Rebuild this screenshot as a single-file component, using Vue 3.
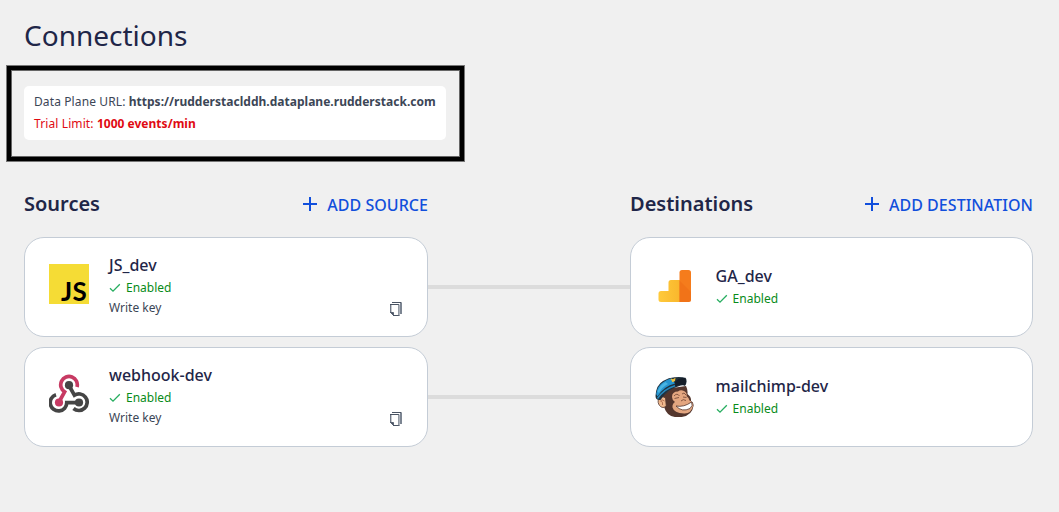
<script setup>
const sources = [
  { name: 'JS_dev', icon: 'js' },
  { name: 'webhook-dev', icon: 'webhook' },
]
const destinations = [
  { name: 'GA_dev', icon: 'analytics' },
  { name: 'mailchimp-dev', icon: 'mailchimp' },
]
</script>

<template>
  <main class="page">
    <h1>Connections</h1>

    <section class="highlight">
      <div class="plane">
        <p>Data Plane URL: <b>https://rudderstaclddh.dataplane.rudderstack.com</b></p>
        <p class="limit">Trial Limit: <b>1000 events/min</b></p>
      </div>
    </section>

    <div class="board">
      <section class="column">
        <header>
          <h2>Sources</h2>
          <a class="add">
            <svg width="14" height="14" viewBox="0 0 14 14"><path d="M7 0v14M0 7h14" /></svg>
            <span>ADD SOURCE</span>
          </a>
        </header>
        <article v-for="s in sources" :key="s.name" class="card">
          <div v-if="s.icon === 'js'" class="logo js"><span>JS</span></div>
          <svg v-else class="logo" viewBox="0 0 40 40">
            <g fill="none" stroke-width="3.7">
              <path stroke="#c73a63" d="M28 13A8.3 8.3 0 1 0 15.6 17.8L10 28" />
              <path stroke="#454545" d="M20 11.5L25.4 21.2A8.3 8.3 0 1 1 24.5 34.5" />
              <path stroke="#454545" d="M7 20.7A8.3 8.3 0 1 0 17.8 28.6H30" />
            </g>
            <circle cx="20" cy="11.2" r="4.1" fill="#454545" />
            <circle cx="10" cy="28.5" r="4.1" fill="#c73a63" />
            <circle cx="30" cy="28.5" r="4.1" fill="#454545" />
          </svg>
          <div class="info">
            <h3>{{ s.name }}</h3>
            <p class="status">
              <svg width="12" height="10" viewBox="0 0 12 10"><path d="M1 5.3L4 8.2L10.8 1.2" /></svg>
              <span>Enabled</span>
            </p>
            <p class="key">Write key</p>
          </div>
          <svg class="copy" width="12" height="14" viewBox="0 0 12 14">
            <path d="M2 .5H11.5" stroke="#495363" />
            <path d="M11 1V12" stroke="#7c8592" stroke-width="2" />
            <path d="M.7 2.5V11" stroke="#6f7886" stroke-width="1.4" />
            <path d="M0 2.500H9M3 13.500H9.500" stroke="#495363" />
            <path d="M8.900 2.500V13.500" stroke="#6f7886" stroke-width="1.300" />
            <path d="M.5 10.500H3.500V13.500Z" fill="#495363" stroke="#495363" stroke-width=".8" />
          </svg>
        </article>
      </section>

      <div class="links"><i></i><i></i></div>

      <section class="column">
        <header>
          <h2>Destinations</h2>
          <a class="add">
            <svg width="14" height="14" viewBox="0 0 14 14"><path d="M7 0v14M0 7h14" /></svg>
            <span>ADD DESTINATION</span>
          </a>
        </header>
        <article v-for="d in destinations" :key="d.name" class="card destination">
          <svg v-if="d.icon === 'analytics'" class="logo analytics" viewBox="0 0 40 40">
            <defs>
              <linearGradient id="gold" x1="0" x2="1"><stop stop-color="#ffca3b" /><stop offset="1" stop-color="#f9b62c" /></linearGradient>
            </defs>
            <path fill="url(#gold)" d="M26 14H16Q13.500 14 13.500 16.500V25H6Q3.500 25 3.500 27.500V33.500Q3.500 36 6 36H26Z" />
            <path fill="#f57c1c" d="M24.500 6.500Q24.500 4 27 4H33.500Q36 4 36 6.500V33.500Q36 36 33.500 36H24.500Z" />
            <path fill="#ed6c16" opacity=".55" d="M24.500 14.500L36 26V33.500Q36 36 33.500 36H24.500Z" />
          </svg>
          <svg v-else class="logo" viewBox="0 0 40 40">
            <path fill="#54362d" d="M7 19L17 11L31 9Q33 13 32.500 17Q36.500 20 36 24Q39 25 38.500 29Q37 40 23 40.300Q12 40 9.500 31Z" />
            <path fill="#f0b98e" stroke="#54362d" stroke-width=".8" d="M10.500 21C6 18 2.500 21 3.200 25.500C4 30 9 32.500 11.200 28.500Z" />
            <path fill="none" stroke="#b57454" d="M9.500 24Q6.500 21.500 5.500 24Q8.500 24.500 7.500 28" />
            <path fill="#e3a680" d="M17 20Q17 14.500 23 14.500Q25.500 12.500 29 14Q32.500 16 31.500 19Q34 20.500 34.500 23.500Q38 24.500 38 29Q36 37 29 36.500Q19 36 17.500 30.500Q17 27 20 25Q17 23 17 20Z" />
            <path fill="none" stroke="#6d4333" stroke-width=".8" d="M19 19Q22 15.500 24.500 19M27 17Q29 14.500 31 18M19.500 21.500L24 20.500M28 20L31.500 20.500M26 24Q28 21.500 31 23.500" />
            <path fill="#fff" stroke="#54362d" stroke-width=".8" d="M21 29Q29 30.500 36.500 25Q38.500 28.500 35 31.500Q27 35.500 21 29Z" />
            <path fill="#20313e" d="M.5 19Q1 8 8 4Q14 .2 20 .3Q27-.5 31 1.500Q32.500 5 30 8.800Q28 7.500 23 9.500Q12 12.500 5.500 23Q.5 23.500.5 19Z" />
            <path fill="#2594cf" d="M1.200 17Q2.500 8.500 8.500 5Q12 2 16.500 1.500L20 6.500Q9 9 2.500 19.500Z" />
            <path fill="#49b4e2" d="M2.500 14.500Q5 8 10.500 5L13 7Q7 10 4 16Z" />
            <path fill="none" stroke="#2789bd" stroke-width="1.500" d="M2.500 21.500Q9 12 20 8.800" />
            <path fill="#f3c33f" d="M15.500 1.500L18 2.300L20.500.8L20 4L17.500 5.200Z" />
            <path fill="#151d28" d="M20 5Q24 .5 30.500.8Q32 4.500 30 8.500Q27 7 20.500 9Z" />
          </svg>
          <div class="info">
            <h3>{{ d.name }}</h3>
            <p class="status">
              <svg width="12" height="10" viewBox="0 0 12 10"><path d="M1 5.300L4 8.200L10.800 1.200" /></svg>
              <span>Enabled</span>
            </p>
          </div>
        </article>
      </section>
    </div>
  </main>
</template>

<style>
body {
  background: #f0f0f0;
}
</style>

<style scoped>
.page {
  box-sizing: border-box;
  width: 1059px;
  height: 512px;
  overflow: hidden;
  padding: 15px 26px 0 24px;
  background: #f0f0f0;
  color: #1f2648;
  font-family: "Noto Sans", sans-serif;
}
h1, h2, h3, p {
  margin: 0;
}
h1 {
  font-size: 28px;
  line-height: 40px;
  font-weight: 400;
}
.highlight {
  box-sizing: border-box;
  width: 457px;
  height: 95px;
  margin: 11px 0 0 -17px;
  border: 4px solid #000;
  outline: 1px solid #777;
  box-shadow: inset 0 0 0 1px #666;
  padding: 16px 13px;
}
.plane {
  box-sizing: border-box;
  width: 422px;
  height: 54px;
  padding: 5px 10px;
  border-radius: 5px;
  background: #fff;
  color: #3c4656;
  font-size: 12px;
  line-height: 22px;
  letter-spacing: 0.11px;
  white-space: nowrap;
}
.plane b {
  letter-spacing: 0.02px;
}
.plane .limit {
  color: #e00a13;
}
.board {
  display: grid;
  grid-template-columns: 404px 202px 403px;
  margin-top: 25px;
}
header {
  display: flex;
  justify-content: space-between;
  height: 51px;
}
h2 {
  font-size: 20px;
  line-height: 36px;
  font-weight: 600;
}
.add {
  display: flex;
  align-items: center;
  gap: 10px;
  height: 37px;
  color: #114fdc;
  font-size: 16px;
  font-weight: 500;
  letter-spacing: 0.04px;
}
.add svg {
  margin: -2px 0 0 -1px;
  fill: none;
  stroke: #114fdc;
  stroke-width: 2;
}
.card {
  box-sizing: border-box;
  display: flex;
  align-items: center;
  height: 100px;
  margin-bottom: 10px;
  padding: 0 25px 0 24px;
  border: 1px solid #c4ccd6;
  border-radius: 20px;
  background: #fff;
}
.logo {
  flex: none;
  width: 40px;
  height: 40px;
  margin-top: -6px;
}
.destination .logo {
  margin-top: 0;
}
.destination .analytics {
  margin-top: -2px;
}
.js {
  display: flex;
  align-items: flex-end;
  justify-content: flex-end;
  background: #f5dc35;
}
.js span {
  margin: 0 2px 0 0;
  color: #000;
  font: 700 24px/25px "Noto Sans", sans-serif;
  font-family: Lato, sans-serif;
  font-size: 26px;
  letter-spacing: 0.3px;
}
.info {
  flex: 1;
  margin: -3px 0 0 20px;
}
.destination .info {
  margin: -1px 0 0 20.600px;
}
h3 {
  font-size: 16px;
  line-height: 24px;
  font-weight: 500;
}
.status {
  display: flex;
  align-items: center;
  gap: 5px;
  padding-top: 1px;
  color: #088b19;
  font-size: 12px;
  line-height: 20px;
}
.status svg {
  fill: none;
  stroke: #27ae60;
  stroke-width: 1.3;
}
.key {
  color: #3c4656;
  font-size: 12px;
  line-height: 20px;
}
.copy {
  align-self: flex-end;
  margin-bottom: 20px;
  fill: none;
}
.links {
  display: flex;
  flex-direction: column;
  gap: 106px;
  padding-top: 99px;
}
.links i {
  height: 4px;
  background: #dcdcdc;
}
</style>
